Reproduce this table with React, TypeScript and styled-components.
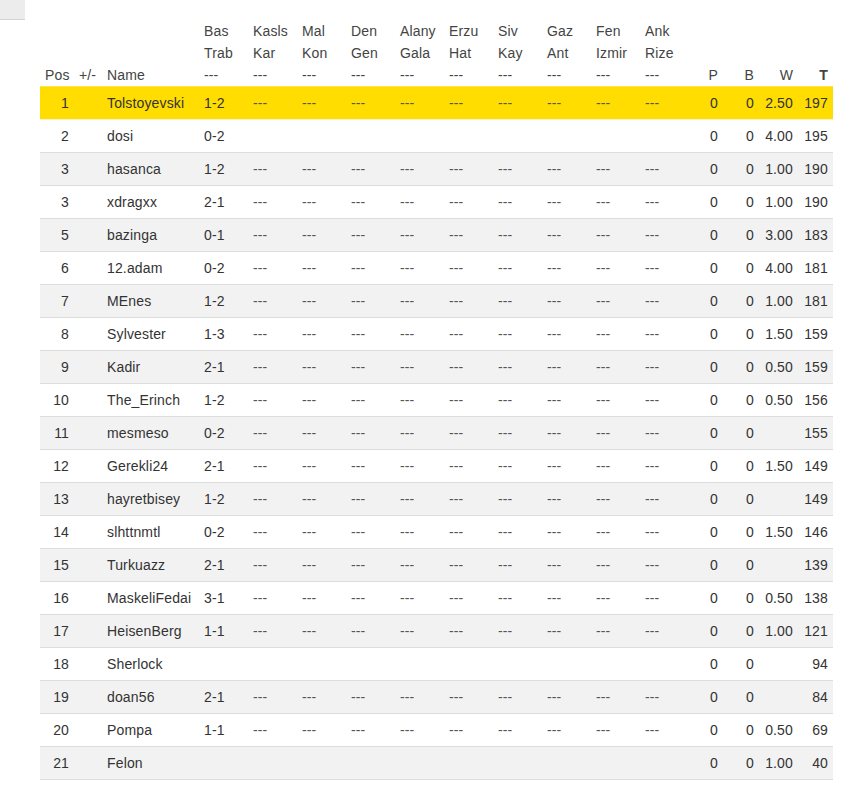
import React from "react";
import styled, { createGlobalStyle } from "styled-components";

const Global = createGlobalStyle`
  html, body { margin: 0; padding: 0; background: #fff; }
  body { font-family: "Liberation Sans", Arial, sans-serif; font-size: 14px; color: #333; letter-spacing: 0.15px; }
`;

const Page = styled.div`
  display: flex;
  flex-direction: column;
  align-items: flex-start;
`;

const CornerTab = styled.div`
  width: 25px;
  height: 19px;
  background: #ececec;
  border-bottom: 1px solid #d4d4d4;
`;

const Table = styled.table`
  margin-left: 40px;
  width: 793px;
  table-layout: fixed;
  border-collapse: separate;
  border-spacing: 0;
`;

const HeadCell = styled.th<{ $align?: string; $bold?: boolean }>`
  padding: 0 5px;
  line-height: 22px;
  font-weight: ${(p) => (p.$bold ? 700 : 400)};
  text-align: ${(p) => p.$align || "left"};
  vertical-align: bottom;
  color: #444;
  white-space: nowrap;
`;

const Row = styled.tr<{ $tone: "hi" | "odd" | "even"; $soft?: boolean; $last?: boolean }>`
  background: ${(p) => (p.$tone === "hi" ? "#ffdd00" : p.$tone === "odd" ? "#f2f2f2" : "#ffffff")};
  td {
    border-top: 1px solid ${(p) => (p.$tone === "hi" ? "#ffe44d" : p.$soft ? "#fbf3cc" : "#dddddd")};
    border-bottom: ${(p) => (p.$last ? "1px solid #dddddd" : "none")};
  }
`;

const Cell = styled.td<{ $align?: string; $dim?: boolean }>`
  padding: 6px 5px;
  line-height: 20px;
  height: 20px;
  text-align: ${(p) => p.$align || "left"};
  color: ${(p) => (p.$dim ? "#555" : "#333")};
  white-space: nowrap;
  overflow: hidden;
`;

const matches = [
  ["Bas", "Trab"],
  ["Kasls", "Kar"],
  ["Mal", "Kon"],
  ["Den", "Gen"],
  ["Alany", "Gala"],
  ["Erzu", "Hat"],
  ["Siv", "Kay"],
  ["Gaz", "Ant"],
  ["Fen", "Izmir"],
  ["Ank", "Rize"],
];

type Entry = [string, string, string, boolean, string, string];
// pos, name, first, restDashes, w, t
const data: Entry[] = [
  ["1", "Tolstoyevski", "1-2", true, "2.50", "197"],
  ["2", "dosi", "0-2", false, "4.00", "195"],
  ["3", "hasanca", "1-2", true, "1.00", "190"],
  ["3", "xdragxx", "2-1", true, "1.00", "190"],
  ["5", "bazinga", "0-1", true, "3.00", "183"],
  ["6", "12.adam", "0-2", true, "4.00", "181"],
  ["7", "MEnes", "1-2", true, "1.00", "181"],
  ["8", "Sylvester", "1-3", true, "1.50", "159"],
  ["9", "Kadir", "2-1", true, "0.50", "159"],
  ["10", "The_Erinch", "1-2", true, "0.50", "156"],
  ["11", "mesmeso", "0-2", true, "", "155"],
  ["12", "Gerekli24", "2-1", true, "1.50", "149"],
  ["13", "hayretbisey", "1-2", true, "", "149"],
  ["14", "slhttnmtl", "0-2", true, "1.50", "146"],
  ["15", "Turkuazz", "2-1", true, "", "139"],
  ["16", "MaskeliFedai", "3-1", true, "0.50", "138"],
  ["17", "HeisenBerg", "1-1", true, "1.00", "121"],
  ["18", "Sherlock", "", false, "", "94"],
  ["19", "doan56", "2-1", true, "", "84"],
  ["20", "Pompa", "1-1", true, "0.50", "69"],
  ["21", "Felon", "", false, "1.00", "40"],
];

const widths = [34, 28, 97, ...matches.map(() => 49), 34, 36, 39, 35];

export default function App() {
  return (
    <Page>
      <Global />
      <CornerTab />
      <Table>
        <colgroup>
          {widths.map((w, i) => (
            <col key={i} style={{ width: w }} />
          ))}
        </colgroup>
        <thead>
          <tr>
            <HeadCell>Pos</HeadCell>
            <HeadCell>+/-</HeadCell>
            <HeadCell>Name</HeadCell>
            {matches.map(([a, b]) => (
              <HeadCell key={a}>
                {a}
                <br />
                {b}
                <br />
                ---
              </HeadCell>
            ))}
            <HeadCell $align="right">P</HeadCell>
            <HeadCell $align="right">B</HeadCell>
            <HeadCell $align="right">W</HeadCell>
            <HeadCell $align="right" $bold>
              T
            </HeadCell>
          </tr>
        </thead>
        <tbody>
          {data.map(([pos, name, first, dashes, w, t], i) => (
            <Row
              key={i}
              $tone={i === 0 ? "hi" : i % 2 === 0 ? "odd" : "even"}
              $soft={i === 1}
              $last={i === data.length - 1}
            >
              <Cell $align="right">{pos}</Cell>
              <Cell />
              <Cell>{name}</Cell>
              <Cell>{first}</Cell>
              {matches.slice(1).map((m) => (
                <Cell key={m[0]} $dim>
                  {dashes ? "---" : ""}
                </Cell>
              ))}
              <Cell $align="right">0</Cell>
              <Cell $align="right">0</Cell>
              <Cell $align="right">{w}</Cell>
              <Cell $align="right">{t}</Cell>
            </Row>
          ))}
        </tbody>
      </Table>
    </Page>
  );
}
